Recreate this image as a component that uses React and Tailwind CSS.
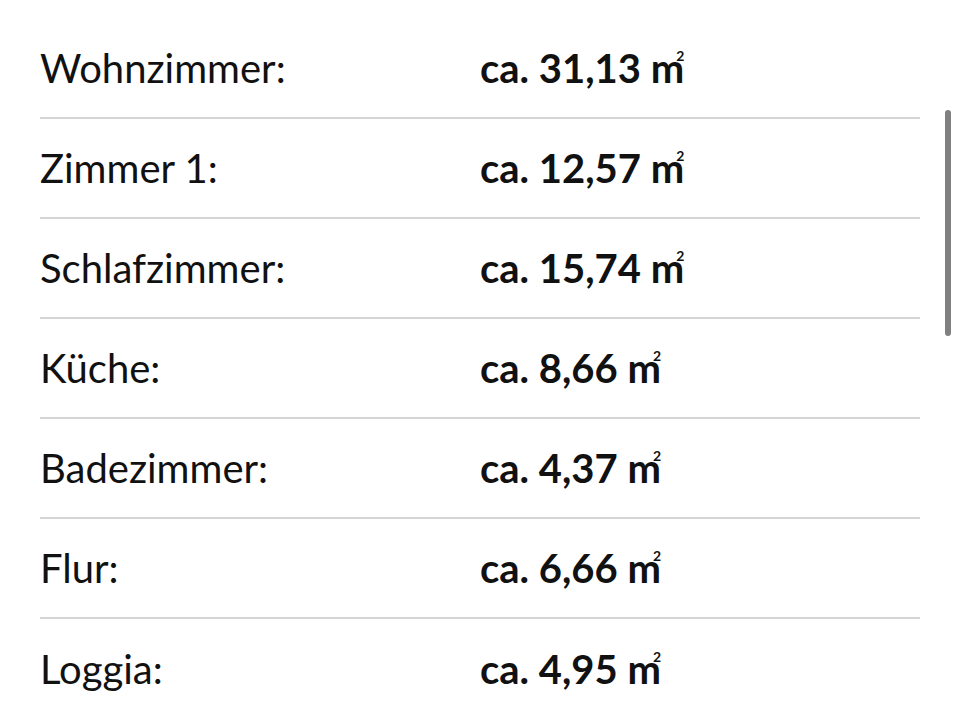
import React from "react";

const rooms = [
  { name: "Wohnzimmer:", size: "31,13" },
  { name: "Zimmer 1:", size: "12,57" },
  { name: "Schlafzimmer:", size: "15,74" },
  { name: "Küche:", size: "8,66" },
  { name: "Badezimmer:", size: "4,37" },
  { name: "Flur:", size: "6,66" },
  { name: "Loggia:", size: "4,95" },
];

function Row({ room, last }) {
  return (
    <div
      className={`flex items-center h-[100px] ${
        last ? "" : "border-b-2 border-[#d4d4d4]"
      }`}
    >
      <div className="w-[440px] shrink-0 text-[40px] text-[#111] font-normal whitespace-nowrap">
        {room.name}
      </div>
      <div className="flex-1 text-[40px] font-bold text-[#111] whitespace-nowrap">
        ca. {room.size} m
        <span className="relative -top-[22px] -ml-[8px] text-[14px] font-bold">
          2
        </span>
      </div>
    </div>
  );
}

export default function App() {
  return (
    <div
      className="relative w-[960px] h-[717px] overflow-hidden bg-white"
      style={{ fontFamily: "Lato, 'Open Sans', sans-serif" }}
    >
      <div className="pt-[19px] pl-[40px] pr-[40px]">
        {rooms.map((room, i) => (
          <Row key={room.name} room={room} last={i === rooms.length - 1} />
        ))}
      </div>
      {/* scrollbar */}
      <div className="absolute left-[945px] top-[110px] w-[6px] h-[226px] rounded-full bg-[#808080]" />
    </div>
  );
}
